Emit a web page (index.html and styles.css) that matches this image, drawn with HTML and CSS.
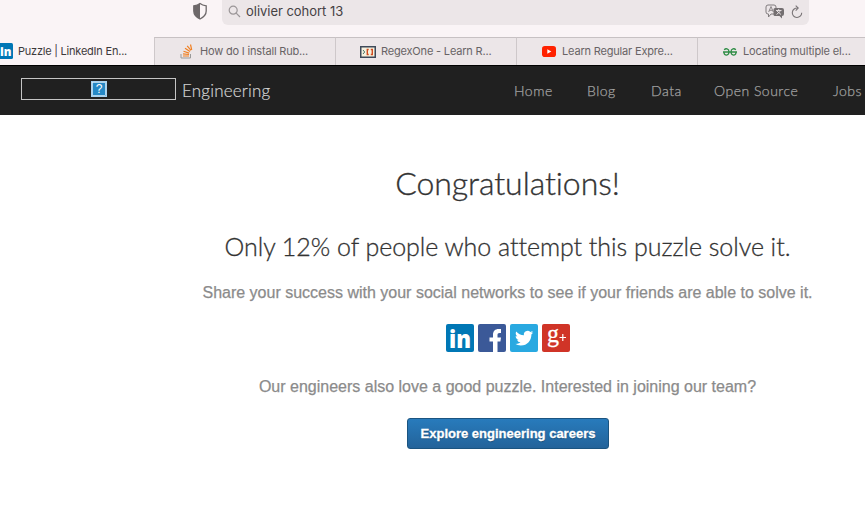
FILE: index.html
```html
<!DOCTYPE html>
<html lang="en">
<head>
<meta charset="utf-8">
<title>Puzzle | LinkedIn Engineering</title>
<link rel="stylesheet" href="styles.css">
</head>
<body>
<div class="toolbar">
  <svg class="shield" width="16" height="18" viewBox="0 0 16 18"><path d="M8 1.500C6 3 4 3.500 1.800 3.800V9c0 4 2.800 6.300 6.200 8 3.400-1.700 6.200-4 6.200-8V3.800C12 3.500 10 3 8 1.500Z" fill="none" stroke="#6d686a" stroke-width="1.300"/><path d="M8 1.500C6 3 4 3.500 1.800 3.800V9c0 4 2.800 6.300 6.200 8Z" fill="#6d686a"/></svg>
  <div class="address">
    <svg width="13" height="13" viewBox="0 0 13 13" fill="none" stroke="#9b9698" stroke-width="1.200"><circle cx="5.200" cy="5.200" r="4"/><path d="m8.200 8.200 3.800 3.800"/></svg>
    <span class="query">olivier cohort 13</span>
    <svg class="translate" width="20" height="15" viewBox="0 0 20 15"><path d="M10 10H6l-2.500 3v-3H3a2 2 0 0 1-2-2V3a2 2 0 0 1 2-2h6a2 2 0 0 1 2 2v1" fill="none" stroke="#817c7e"/><path d="M3.700 8 6 2.500 8.300 8M4.500 6.300h3" fill="none" stroke="#817c7e" stroke-width=".9"/><path d="M10 4h7a2 2 0 0 1 2 2v4a2 2 0 0 1-2 2v2.500L14.500 12H10a1.500 1.500 0 0 1-1.500-1.500v-5A1.500 1.500 0 0 1 10 4Z" fill="#746f71"/><path d="M11 6.500h5.500M13.700 5v1.500M12 7l4 3.500M15.500 7l-4 3.500" stroke="#eee8ea" fill="none" stroke-width=".9"/></svg>
    <svg class="reload" width="12" height="14" viewBox="0 0 12 14" fill="none" stroke="#797476" stroke-width="1.100"><path d="M6.800 3.100A4.700 4.700 0 1 0 10.700 7.700M4.700.7l2.500 2.400-2.500 2.500"/></svg>
  </div>
</div>
<div class="tabs">
  <div class="tab active">
    <svg width="16" height="16" viewBox="0 0 16 16"><rect width="16" height="16" rx="1.500" fill="#0077b5"/><text class="mark-in" x="3" y="13" font-size="13" textLength="11.500" lengthAdjust="spacingAndGlyphs">in</text></svg>
    <span class="t1">Puzzle | LinkedIn En...</span>
  </div>
  <div class="tab so">
    <svg width="14" height="15" viewBox="0 0 14 15" fill="none"><path d="M1 10v4h9.500v-4" stroke="#999"/><path d="M3 12h6M3 9.800l6 .7M3.500 7.200l5.700 1.900M5 4.300l5 3.200M7.200 1.800l3.800 4.600M10.500.5l1.200 5.400" stroke="#f08024" stroke-width="1.200"/></svg>
    <span class="t2">How do I install Rub...</span>
  </div>
  <div class="tab rx">
    <svg width="16" height="12" viewBox="0 0 16 12" fill="none"><rect x=".75" y=".75" width="14.500" height="10.500" fill="#f5f0dd" stroke="#3e4959" stroke-width="1.500"/><path d="m3 4 1.700 2L3 8" stroke="#477367"/><path d="M8.700 3.500H7.300v5h1.400M10.800 3.500h1.500v5h-1.500" stroke="#d04b20" stroke-width="1.400"/></svg>
    <span class="t3">RegexOne - Learn R...</span>
  </div>
  <div class="tab yt">
    <svg width="14" height="11" viewBox="0 0 14 11"><rect width="14" height="11" rx="2.800" fill="#f20"/><path d="m5.300 3.200 4 2.300-4 2.300Z" fill="#fff"/></svg>
    <span class="t4">Learn Regular Expre...</span>
  </div>
  <div class="tab gg">
    <svg width="14" height="8" viewBox="0 0 14 8" fill="none" stroke="#2f8d46" stroke-width="1.300"><path d="M0 4h14M1.200 1.800C2.500.2 6 .2 6 3.800 6 8 1 8 1 4.500M12.800 1.800C11.500.2 8 .2 8 3.800 8 8 13 8 13 4.500"/></svg>
    <span class="t5">Locating multiple el...</span>
  </div>
</div>
<header>
  <div class="missing"><svg width="16" height="16" viewBox="0 0 16 16"><rect x=".5" y=".5" width="15" height="15" fill="#2588c5" stroke="#a9d3ef"/><rect x="1.500" y="1.500" width="13" height="13" fill="none" stroke="#e7f4fc" stroke-width=".7"/><text x="8" y="12" text-anchor="middle" class="question">?</text></svg></div>
  <span class="brand">Engineering</span>
  <nav><a class="n1">Home</a><a class="n2">Blog</a><a class="n3">Data</a><a class="n4">Open Source</a><a class="n5">Jobs</a></nav>
</header>
<main>
  <h1><span>Congratulations!</span></h1>
  <h2><span>Only 12% of people who attempt this puzzle solve it.</span></h2>
  <p class="share"><span>Share your success with your social networks to see if your friends are able to solve it.</span></p>
  <div class="social">
    <svg width="28" height="28" viewBox="0 0 28 28"><rect width="28" height="28" rx="2" fill="#0077b5"/><text class="mark-in" x="3" y="24" font-size="25" textLength="22" lengthAdjust="spacingAndGlyphs">in</text></svg>
    <svg width="28" height="28" viewBox="0 0 28 28"><rect width="28" height="28" rx="2" fill="#3b5998"/><path d="M15 28V17.500h-3.500v-4H15V11c0-4 2.200-6 5.500-6H23v4h-1.200c-1.900 0-2.300.8-2.300 2.300v2.200H23l-.6 4h-2.900V28Z" fill="#fff"/></svg>
    <svg width="28" height="28" viewBox="0 0 28 28"><rect width="28" height="28" rx="2" fill="#29a9e1"/><path transform="translate(5 5) scale(.76)" fill="#fff" d="M23.950 4.570a10 10 0 0 1-2.820.77 4.960 4.960 0 0 0 2.160-2.720c-.95.560-2 .96-3.130 1.190a4.920 4.920 0 0 0-8.380 4.480C7.690 8.100 4.070 6.130 1.640 3.160a4.820 4.820 0 0 0-.67 2.480c0 1.710.87 3.210 2.190 4.100a4.900 4.900 0 0 1-2.230-.62v.06a4.920 4.920 0 0 0 3.950 4.830 5 5 0 0 1-2.210.08 4.940 4.940 0 0 0 4.600 3.420A9.870 9.870 0 0 1 0 19.540a14 14 0 0 0 7.550 2.210c9.050 0 14-7.500 14-13.980v-.64a9.940 9.940 0 0 0 2.400-2.560Z"/></svg>
    <svg width="28" height="28" viewBox="0 0 28 28"><rect width="28" height="28" rx="2" fill="#d03427"/><text x="5" y="17.500" class="google" textLength="12" lengthAdjust="spacingAndGlyphs">g</text><path d="M17.500 13.500h6.500M20.800 10v7" stroke="#fff" stroke-width="1.200"/></svg>
  </div>
  <p class="team"><span>Our engineers also love a good puzzle. Interested in joining our team?</span></p>
  <a class="button"><span>Explore engineering careers</span></a>
</main>
</body>
</html>
```
FILE: styles.css
```css
* { box-sizing: border-box; }
body { margin: 0; width: 865px; height: 510px; overflow: hidden; background: #fff; font-family: "Liberation Sans", Arial, sans-serif; font-variant-ligatures: none; }
svg { display: block; flex: none; }
span, a { white-space: nowrap; }
.toolbar { display: flex; height: 37px; padding-left: 192px; background: #faf4f6; }
.shield { margin-top: 2px; }
.address { display: flex; align-items: center; width: 587px; height: 25px; margin-left: 14px; padding: 0 6px 2px; border-radius: 0 0 6px 6px; background: #ece6e8; }
.query { margin: 0 0 1px 5px; color: #454143; font: 13px Inter, sans-serif; letter-spacing: -.03px; }
.translate { margin-left: auto; }
.reload { margin-left: 6px; }
.tabs { display: flex; height: 28px; background: #ece6e8; }
.tab { display: flex; align-items: center; flex: none; width: 181px; border-top: 1px solid #c7c1c3; border-left: 1px solid #cec8ca; color: #686365; font: 11px Inter, sans-serif; letter-spacing: -.18px; }
.tab span { margin-bottom: 1px; }
.tab.active { width: 154px; border: 0; background: #faf4f6; color: #3d393b; }
.active svg { margin: 0 5px 0 -3px; }
.tab.active span { margin: 0; letter-spacing: -.22px; }
.so { padding-left: 25px; }
.so svg { margin-right: 6px; }
.rx { padding-left: 24px; }
.rx svg { margin-right: 5px; }
.yt { padding-left: 25px; }
.yt svg { margin-right: 6px; }
.gg { padding-left: 25px; }
.gg svg { margin-right: 6px; }
.gg span { letter-spacing: -.13px; }
.mark-in { fill: #fff; font-family: "Open Sans", sans-serif; font-weight: 800; letter-spacing: 0; }
header { display: flex; align-items: center; height: 50px; padding-left: 21px; border-top: 1px solid #000; background: #202020; font-family: Lato, sans-serif; }
.missing { display: flex; align-items: center; justify-content: center; width: 155px; height: 22px; margin-bottom: 4px; border: 1px solid #c4c4c4; }
.question { fill: #fff; font: 12px "Liberation Sans", sans-serif; }
.brand { width: 89px; margin-left: 6px; color: #d2d2d2; font-size: 17px; font-weight: 300; letter-spacing: .2px; -webkit-text-stroke: .2px; }
nav { display: flex; margin-left: 243px; color: #a2a2a2; font-size: 14px; font-weight: 300; letter-spacing: .5px; -webkit-text-stroke: .25px; }
nav a { flex: none; }
.n1 { width: 73px; }
.n2 { width: 64px; }
.n3 { width: 63px; }
.n4 { width: 119px; }
main { display: flex; flex-direction: column; align-items: center; margin-left: 150px; padding-top: 44px; }
h1, h2, p { margin: 0; }
h1 { height: 48px; color: #333; font: 300 32px/48px Lato, sans-serif; letter-spacing: -.06px; -webkit-text-stroke: .35px; }
h2 { height: 36px; margin-top: 21px; color: #333; font: 300 25px/36px Lato, sans-serif; letter-spacing: -.04px; -webkit-text-stroke: .3px; }
p { color: #8b8b8b; font-size: 16px; line-height: 24px; -webkit-text-stroke: .25px; }
.share { margin-top: 17px; }
.social { display: flex; gap: 4px; margin: 19px 0 0 1px; }
.google { fill: #fff; stroke: #fff; stroke-width: .3px; font: 26px "Liberation Serif", serif; }
.team { margin-top: 23px; }
.button { display: flex; align-items: center; justify-content: center; width: 202px; height: 31px; margin: 19px 0 0 1px; border: 1px solid #1b5480; border-radius: 3px; background: linear-gradient(#287bbc, #23639a); color: #fff; font-size: 13px; font-weight: bold; text-shadow: 0 1px 1px #164a73; -webkit-text-stroke: .3px; }
```
